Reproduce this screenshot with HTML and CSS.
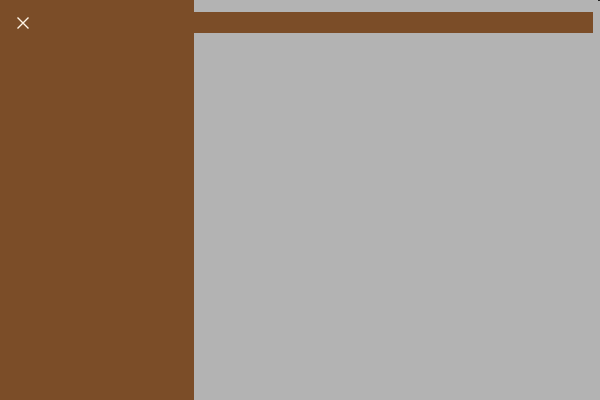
FILE: index.html
```html
<!DOCTYPE html>
<html lang="en">
<head>
<meta charset="utf-8">
<meta name="viewport" content="width=device-width, initial-scale=1">
<title>Navigation drawer</title>
<link rel="stylesheet" href="styles.css">
</head>
<body>
<div class="layout">
  <aside class="drawer">
    <button class="close" type="button" aria-label="Close menu">
      <svg class="close-icon" viewBox="0 0 12 12" aria-hidden="true">
        <path d="M0.5 0.5 11.5 11.5M11.5 0.5 0.5 11.5"/>
      </svg>
    </button>
  </aside>
  <main class="content">
    <header class="bar"></header>
  </main>
</div>
<span class="corner"></span>
</body>
</html>
```

FILE: styles.css
```css
* {
  box-sizing: border-box;
}

body {
  margin: 0;
  background: #b3b3b3;
  font-family: "Liberation Sans", sans-serif;
}

.layout {
  display: flex;
  min-height: 100vh;
}

.drawer {
  flex: 0 0 194px;
  padding: 12px;
  background: #7b4d28;
}

.close {
  display: block;
  padding: 5px;
  border: 0;
  background: none;
  cursor: pointer;
}

.close-icon {
  display: block;
  width: 12px;
  height: 12px;
  overflow: visible;
  fill: none;
  stroke: #fff5e6;
  stroke-width: 1.4;
}

.content {
  flex: 1;
  padding: 12px 7px 12px 0;
}

.bar {
  height: 21px;
  background: #7b4d28;
}

/* dark tip in the window's top right corner */
.corner {
  position: absolute;
  top: 0;
  right: 0;
  width: 2px;
  height: 1px;
  background: #222;
}
```
